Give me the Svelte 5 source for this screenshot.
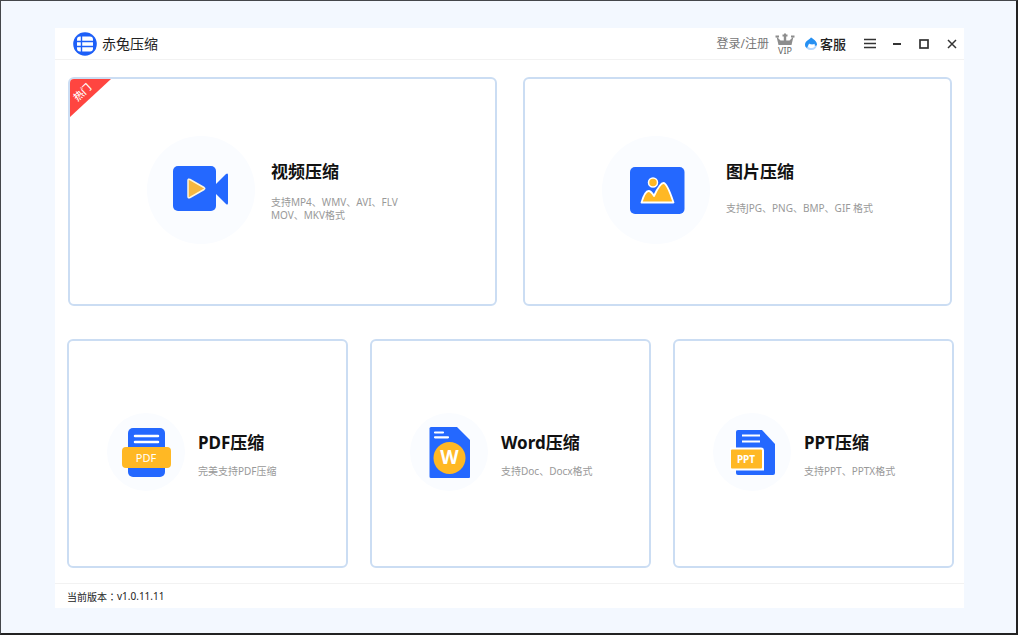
<script lang="ts">
type Icon = 'video' | 'image' | 'pdf' | 'word' | 'ppt';

interface Tool {
	icon: Icon;
	title: string;
	lines: string[];
	hot?: boolean;
}

const mediaTools: readonly Tool[] = [
	{ icon: 'video', title: '视频压缩', lines: ['支持MP4、WMV、AVI、FLV', 'MOV、MKV格式'], hot: true },
	{ icon: 'image', title: '图片压缩', lines: ['支持JPG、PNG、BMP、GIF 格式'] },
];

const documentTools: readonly Tool[] = [
	{ icon: 'pdf', title: 'PDF压缩', lines: ['完美支持PDF压缩'] },
	{ icon: 'word', title: 'Word压缩', lines: ['支持Doc、Docx格式'] },
	{ icon: 'ppt', title: 'PPT压缩', lines: ['支持PPT、PPTX格式'] },
];

const version = 'v1.0.11.11';
</script>

{#snippet toolIcon(icon: Icon)}
	{#if icon === 'video'}
		<svg class="art" viewBox="0 0 108 108" aria-hidden="true">
			<rect x="26" y="30" width="43" height="45" rx="5" fill="#2468ff" />
			<path d="M69 48L79 38Q81 36.500 81 39V67Q81 69.500 79 68L69 58Z" fill="#2468ff" />
			<path d="M41 44.500V60.500Q41 62.500 43 61.500L57 53.500Q58.500 52.500 57 51.500L43 43.500Q41 42.500 41 44.500Z" fill="#f5b740" stroke="#fff6dc" stroke-width="1.500" />
		</svg>
	{:else if icon === 'image'}
		<svg class="art" viewBox="0 0 108 108" aria-hidden="true">
			<rect x="28" y="31" width="54.500" height="47" rx="5" fill="#2468ff" />
			<path d="M39.500 66.500Q43 55 46.500 55Q49 55 52 60Q58 47 61.500 47Q65 47 71.500 66.500Z" fill="#ffb824" stroke="#fff" stroke-width="1.800" stroke-linejoin="round" />
			<circle cx="51" cy="46.500" r="4.500" fill="#ffb824" stroke="#fff" stroke-width="1.500" />
		</svg>
	{:else if icon === 'pdf'}
		<svg class="art" viewBox="0 0 78 78" aria-hidden="true">
			<rect x="21" y="15" width="37" height="49" rx="5" fill="#2468ff" />
			<path d="M28 23H51M28 29H51" stroke="#fff" stroke-width="2.500" stroke-linecap="round" />
			<rect x="15" y="34" width="49" height="21" rx="4" fill="#ffb824" />
			<text x="39" y="49" font-size="11" fill="#fff">PDF</text>
		</svg>
	{:else if icon === 'word'}
		<svg class="art" viewBox="0 0 78 78" aria-hidden="true">
			<path d="M21 14H47L60 27V64Q60 65 59 65H21Q19.500 65 19.500 63.500V15.500Q19.500 14 21 14Z" fill="#2468ff" />
			<path d="M25 19.500H33M25 24.300H38" stroke="#fff" stroke-width="2.200" stroke-linecap="round" />
			<circle cx="39.500" cy="45" r="16" fill="#ffb824" />
			<text class="heavy" x="39.500" y="51" font-size="19" fill="#fff">W</text>
		</svg>
	{:else}
		<svg class="art" viewBox="0 0 78 78" aria-hidden="true">
			<path d="M25 17H49L62 31V60Q62 62 60 62H25Q23 62 23 60V19Q23 17 25 17Z" fill="#2468ff" />
			<path d="M29 22.500H47M29 28.500H47" stroke="#fff" stroke-width="2.200" />
			<path d="M17 34.500H48Q51 34.500 51 37.500V57.500H17Z" fill="#fff" />
			<rect x="18" y="36.500" width="31" height="19" rx="1" fill="#ffb824" />
			<text class="heavy" x="33" y="49.500" font-size="10" fill="#fff">PPT</text>
		</svg>
	{/if}
{/snippet}

{#snippet toolCard(tool: Tool)}
	<button type="button" class="card">
		{#if tool.hot}
			<span class="hot"><span>热门</span></span>
		{/if}
		<span class="disc">{@render toolIcon(tool.icon)}</span>
		<span class="info">
			<span class="title">{tool.title}</span>
			<span class="desc">
				{#each tool.lines as line}
					<span>{line}</span>
				{/each}
			</span>
		</span>
	</button>
{/snippet}

<div class="page">
	<div class="window">
		<header>
			<div class="brand">
				<svg width="24" height="24" viewBox="0 0 24 24" aria-hidden="true">
					<circle cx="12" cy="12" r="11.800" fill="#1d5ff8" />
					<rect x="4" y="4.500" width="16" height="15" rx="3" fill="#fff" />
					<path d="M8.500 4V20M4 9.500H20M4 14.500H20" stroke="#1d5ff8" stroke-width="1.400" />
				</svg>
				<h1>赤兔压缩</h1>
			</div>
			<div class="account">
				<a class="login" href="#login">登录/注册</a>
				<a class="vip" href="#vip" aria-label="VIP">
					<svg width="20" height="22" viewBox="0 0 20 22" aria-hidden="true">
						<path d="M1.500 3.500L5.500 7.500H8.800V3H11.200V7.500H14.500L18.500 3.500L16.500 12H3.500Z" fill="#8d8d8d" />
						<path d="M7.500 2.500H12.500M10 .5V4M.5 3.500H4M16 3.500H19.500" stroke="#8d8d8d" stroke-width="2" />
						<text x="10" y="20.500" font-size="9" fill="#666">VIP</text>
					</svg>
				</a>
				<a class="service" href="#service">
					<svg width="12" height="14" viewBox="0 0 12 14" aria-hidden="true">
						<path d="M6 .5C8 2 12 4 12 8A5.500 5.500 0 0 1 6 13A5.500 5.500 0 0 1 0 8C0 4 4 3 6 .5Z" fill="#b4d8ff" />
						<path d="M6 .5C8 2 12 4 12 8L10.500 9L9.500 6.800Q6 8 4 6.500L2 11Q0 10 0 8C0 4 4 3 6 .5Z" fill="#2590f2" />
						<path d="M4.200 7Q6.500 8.500 9.200 7.300L9.800 9.500Q8 11.500 5.500 11Q3.500 10.500 3 9.500Z" fill="#fff" />
					</svg>
					客服
				</a>
			</div>
			<div class="controls">
				<button type="button" aria-label="菜单">
					<svg width="12" height="12" viewBox="0 0 12 12"><path d="M0 1.500H12M0 5.500H12M0 9.500H12" /></svg>
				</button>
				<button type="button" aria-label="最小化">
					<svg width="12" height="12" viewBox="0 0 12 12"><path d="M2 6H10" stroke-width="2" /></svg>
				</button>
				<button type="button" aria-label="最大化">
					<svg width="12" height="12" viewBox="0 0 12 12"><rect x="2" y="2" width="8" height="8" fill="none" stroke-width="1.700" /></svg>
				</button>
				<button type="button" aria-label="关闭">
					<svg width="12" height="12" viewBox="0 0 12 12"><path d="M3 2L11 10M11 2L3 10" /></svg>
				</button>
			</div>
		</header>

		<main>
			<section class="row media" aria-label="媒体压缩">
				{#each mediaTools as tool (tool.icon)}
					{@render toolCard(tool)}
				{/each}
			</section>
			<section class="row documents" aria-label="文档压缩">
				{#each documentTools as tool (tool.icon)}
					{@render toolCard(tool)}
				{/each}
			</section>
		</main>

		<footer>当前版本<span class="colon">：</span>{version}</footer>
	</div>
</div>

<style>
	:global(body) { background: #f3f8ff; }
	.page { box-sizing: border-box; min-height: 100vh; padding: 27px 52px 25px 54px; border: 1px solid #44474b; border-right: 2px solid #222; border-bottom: 2px solid #222; background: #f3f8ff; font-family: "Noto Sans", "Noto Sans CJK SC", sans-serif; color: #222; }
	.window { background: #fff; }

	header { display: flex; align-items: center; height: 31px; padding-left: 18px; border-bottom: 1px solid #f2f2f2; }
	.brand { display: flex; align-items: center; gap: 5px; margin-right: auto; }
	h1 { margin: 0; font-size: 14px; font-weight: 400; line-height: 24px; }
	.account { display: flex; align-items: center; gap: 6px; margin-right: 10px; }
	.account a { display: flex; align-items: center; text-decoration: none; line-height: 20px; }
	.login { color: #777; font-size: 12px; }
	.vip { margin-right: 4px; }
	.account .service { gap: 3px; color: #222; font-size: 13px; font-weight: 500; }
	.controls { display: flex; }
	.controls button { display: grid; place-items: center; width: 27px; height: 31px; padding: 0; border: 0; background: none; cursor: pointer; }
	.controls button:hover { background: #f3f8ff; }
	.controls svg { stroke: #333; stroke-width: 1.5; }

	main { display: grid; gap: 33px; padding: 17px 10px 15px 12px; }
	.row { display: grid; }
	.media { grid-template-columns: repeat(2, 1fr); gap: 26px; padding: 0 2px 0 1px; }
	.documents { grid-template-columns: repeat(3, 1fr); gap: 22px; }

	.card { position: relative; display: flex; align-items: center; min-height: 229px; padding: 0; border: 2px solid #cbddf3; border-radius: 6px; background: #fff; font-family: inherit; text-align: left; overflow: hidden; cursor: pointer; }
	.card:hover { border-color: #2468ff; }
	.media .card { gap: 16px; padding: 0 12px 4px 77px; }
	.documents .card { gap: 13px; padding: 0 12px 3px 38px; }
	.disc { flex: none; width: 78px; height: 78px; border-radius: 50%; background: #fafcff; }
	.media .disc { width: 108px; height: 108px; }
	.art { display: block; width: 100%; height: 100%; }
	svg text { text-anchor: middle; font-family: "Noto Sans", sans-serif; }
	.heavy { font-weight: 700; }

	.info { display: grid; gap: 10px; padding-top: 5px; }
	.media .info { gap: 12px; padding-top: 2px; }
	.title { color: #111; font-size: 17px; font-weight: 700; line-height: 24px; }
	.desc { display: grid; align-content: center; color: #999; font-size: 10px; line-height: 13px; }
	.media .desc { min-height: 26px; }

	.hot { position: absolute; top: 0; left: 0; width: 41px; height: 38px; background: #ff4540; clip-path: polygon(0 0, 100% 0, 0 100%); color: #fff; font-size: 10px; font-weight: 500; line-height: 12px; }
	.hot span { position: absolute; top: 7px; left: 2px; transform: rotate(-43deg); }

	footer { display: flex; align-items: center; height: 24px; padding-left: 12px; border-top: 1px solid #f2f2f2; font-size: 10px; }
	.colon { font-family: "Noto Sans CJK TC", sans-serif; }
</style>
